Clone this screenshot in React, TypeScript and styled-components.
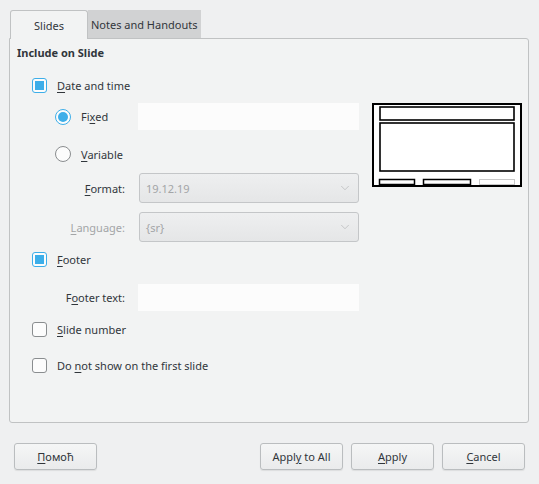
import { ChevronDown } from "lucide-react";
import styled, { createGlobalStyle } from "styled-components";

const GlobalStyle = createGlobalStyle`
  html, body {
    margin: 0;
    padding: 0;
    background: #eff0f1;
  }
  body {
    font-family: "Noto Sans", "DejaVu Sans", sans-serif;
    font-size: 11px;
    color: #31363b;
  }
`;

const Window = styled.div`
  width: 539px;
  height: 484px;
  box-sizing: border-box;
  padding: 10px 10px 0 9px;
  display: flex;
  flex-direction: column;
`;

const TabBar = styled.div`
  display: flex;
  align-items: flex-start;
  margin-left: 1px;
  height: 28px;
`;

const Tab = styled.div<{ $active?: boolean }>`
  box-sizing: border-box;
  height: ${(p) => (p.$active ? "29px" : "28px")};
  padding: ${(p) => (p.$active ? "0 23px" : "0 4px 0 3px")};
  display: flex;
  align-items: center;
  background: ${(p) => (p.$active ? "#f2f3f3" : "#d1d2d3")};
  border: ${(p) => (p.$active ? "1px solid #c0c2c3" : "none")};
  border-bottom: none;
  border-radius: ${(p) => (p.$active ? "3px 3px 0 0" : "0")};
  position: relative;
  z-index: 1;
  font-size: 11px;
  color: #31363b;
`;

const Panel = styled.div`
  box-sizing: border-box;
  height: 385px;
  background: #f2f3f3;
  border: 1px solid #c0c2c3;
  border-radius: 0 3px 3px 3px;
  padding: 4px 0 0 0;
`;

const Heading = styled.div`
  font-weight: bold;
  line-height: 20px;
  padding-left: 7px;
`;

const Body = styled.div`
  display: flex;
  gap: 13px;
`;

const Form = styled.div`
  width: 349px;
  display: flex;
  flex-direction: column;
`;

const Row = styled.div<{ $top: number; $indent?: number; $h?: number }>`
  display: flex;
  align-items: center;
  margin-top: ${(p) => p.$top}px;
  padding-left: ${(p) => p.$indent ?? 0}px;
  height: ${(p) => p.$h ?? 20}px;
`;

const CheckBox = styled.span<{ $checked?: boolean }>`
  box-sizing: border-box;
  width: 15px;
  height: 15px;
  border-radius: 3px;
  border: 1px solid ${(p) => (p.$checked ? "#3daee9" : "#8a8d8f")};
  background: #fcfcfc;
  display: flex;
  align-items: center;
  justify-content: center;
  margin-right: 10px;
  flex: none;
  &::after {
    content: "";
    display: ${(p) => (p.$checked ? "block" : "none")};
    width: 9px;
    height: 9px;
    background: #3daee9;
  }
`;

const Radio = styled.span<{ $checked?: boolean }>`
  box-sizing: border-box;
  width: 16px;
  height: 16px;
  border-radius: 50%;
  border: 1px solid ${(p) => (p.$checked ? "#3daee9" : "#8a8d8f")};
  background: #fcfcfc;
  display: flex;
  align-items: center;
  justify-content: center;
  margin-right: 10px;
  flex: none;
  &::after {
    content: "";
    display: ${(p) => (p.$checked ? "block" : "none")};
    width: 10px;
    height: 10px;
    border-radius: 50%;
    background: #3daee9;
  }
`;

const Label = styled.span<{ $disabled?: boolean }>`
  color: ${(p) => (p.$disabled ? "#a3a5a7" : "#31363b")};
  white-space: nowrap;
  u {
    text-underline-offset: 2px;
  }
`;

const FieldLabel = styled(Label)<{ $gap?: number }>`
  width: 115px;
  text-align: right;
  margin-right: ${(p) => p.$gap ?? 14}px;
  flex: none;
`;

const RadioLabel = styled.div`
  display: flex;
  align-items: center;
  width: 83px;
  flex: none;
`;

const TextField = styled.div`
  width: 221px;
  height: 27px;
  background: #fcfcfc;
  flex: none;
`;

const Combo = styled.div`
  box-sizing: border-box;
  width: 220px;
  height: 30px;
  flex: none;
  border: 1px solid #c4c6c8;
  border-radius: 3px;
  background: linear-gradient(#eeeff0, #e5e6e7);
  display: flex;
  align-items: center;
  justify-content: space-between;
  padding: 0 6px 0 6px;
  color: #a3a5a7;
`;

const Preview = styled.div`
  padding-top: 40px;
`;

const ButtonBar = styled.div`
  display: flex;
  justify-content: space-between;
  margin-top: 20px;
  padding: 0 4px 0 5px;
`;

const ButtonGroup = styled.div`
  display: flex;
  gap: 8px;
`;

const Button = styled.button`
  box-sizing: border-box;
  width: 83px;
  height: 27px;
  border: 1px solid #babdbf;
  border-radius: 3px;
  background: linear-gradient(#f5f6f6, #eaebec);
  box-shadow: 0 1px 1px rgba(0, 0, 0, 0.08);
  font-family: "Noto Sans", "DejaVu Sans", sans-serif;
  font-size: 11px;
  color: #31363b;
  padding: 0;
  u {
    text-underline-offset: 2px;
  }
`;

function SlidePreview() {
  return (
    <svg width="150" height="84" viewBox="0 0 150 84">
      <rect x="1" y="1" width="148" height="82" fill="#fff" stroke="#000" strokeWidth="2" />
      <rect x="8" y="4" width="134" height="13" fill="none" stroke="#000" strokeWidth="1.6" />
      <rect x="8" y="20" width="134" height="48" fill="none" stroke="#000" strokeWidth="1.6" />
      <rect x="7.5" y="76.5" width="35" height="5" fill="none" stroke="#000" strokeWidth="1.5" />
      <rect x="51.5" y="76.5" width="47" height="5" fill="none" stroke="#000" strokeWidth="1.5" />
      <rect x="107.5" y="76.5" width="35" height="5" fill="none" stroke="#c8c8c8" strokeWidth="1" />
    </svg>
  );
}

export default function App() {
  return (
    <>
      <GlobalStyle />
      <Window>
        <TabBar>
          <Tab $active>Slides</Tab>
          <Tab>Notes and Handouts</Tab>
        </TabBar>
        <Panel>
          <Heading>Include on Slide</Heading>
          <Body>
            <Form>
              <Row $top={12} $indent={22}>
                <CheckBox $checked />
                <Label><u>D</u>ate and time</Label>
              </Row>
              <Row $top={8} $indent={45} $h={27}>
                <RadioLabel>
                  <Radio $checked />
                  <Label>Fi<u>x</u>ed</Label>
                </RadioLabel>
                <TextField />
              </Row>
              <Row $top={14} $indent={45}>
                <Radio />
                <Label><u>V</u>ariable</Label>
              </Row>
              <Row $top={9} $h={30}>
                <FieldLabel><u>F</u>ormat:</FieldLabel>
                <Combo>
                  19.12.19
                  <ChevronDown size={14} strokeWidth={1} color="#a8aaac" />
                </Combo>
              </Row>
              <Row $top={9} $h={30}>
                <FieldLabel $disabled><u>L</u>anguage:</FieldLabel>
                <Combo>
                  {"{sr}"}
                  <ChevronDown size={14} strokeWidth={1} color="#a8aaac" />
                </Combo>
              </Row>
              <Row $top={7} $indent={22}>
                <CheckBox $checked />
                <Label><u>F</u>ooter</Label>
              </Row>
              <Row $top={15} $h={27}>
                <FieldLabel $gap={13}>F<u>o</u>oter text:</FieldLabel>
                <TextField />
              </Row>
              <Row $top={8} $indent={22}>
                <CheckBox />
                <Label><u>S</u>lide number</Label>
              </Row>
              <Row $top={16} $indent={22}>
                <CheckBox />
                <Label>Do <u>n</u>ot show on the first slide</Label>
              </Row>
            </Form>
            <Preview>
              <SlidePreview />
            </Preview>
          </Body>
        </Panel>
        <ButtonBar>
          <Button><u>П</u>омоћ</Button>
          <ButtonGroup>
            <Button>Appl<u>y</u> to All</Button>
            <Button><u>A</u>pply</Button>
            <Button><u>C</u>ancel</Button>
          </ButtonGroup>
        </ButtonBar>
      </Window>
    </>
  );
}
